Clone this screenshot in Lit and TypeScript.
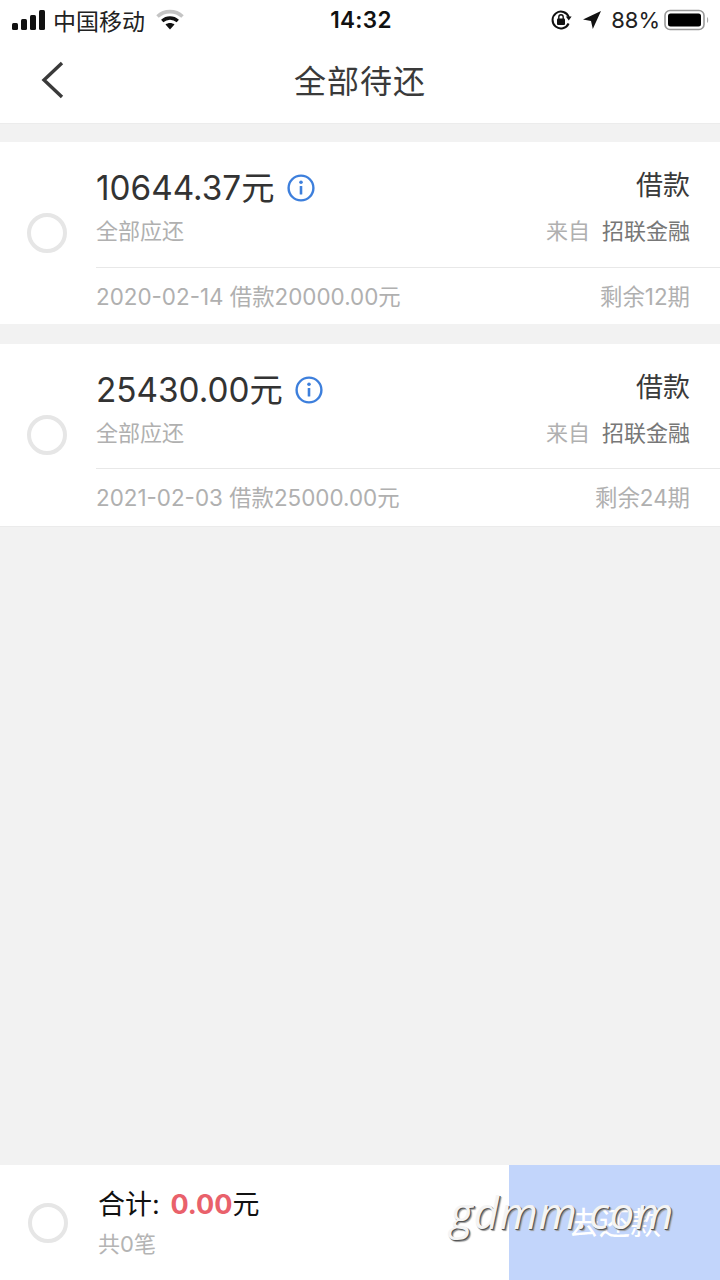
import { LitElement, html, css, svg } from "lit";
import { customElement } from "lit/decorators.js";

const loans = [
  { amount: "10644.37", date: "2020-02-14 借款20000.00元", left: "剩余12期" },
  { amount: "25430.00", date: "2021-02-03 借款25000.00元", left: "剩余24期" },
];

const infoIcon = svg`<svg class="info" width="28" height="28" viewBox="0 0 28 28" fill="none">
  <circle cx="14" cy="14" r="12.4" stroke="#3d7fdc" stroke-width="2.400"/>
  <rect x="12.7" y="12" width="2.6" height="8.5" rx="0.6" fill="#3d7fdc"/>
  <circle cx="14" cy="8.2" r="1.800" fill="#3d7fdc"/>
</svg>`;

@customElement("app-root")
export class AppRoot extends LitElement {
  static styles = css`
    :host {
      display: block;
      width: 720px;
      height: 1280px;
      position: relative;
      overflow: hidden;
      background: #f2f2f2;
      font-family: Inter, "Noto Sans CJK SC", sans-serif;
      color: #333;
    }
    .page { display: flex; flex-direction: column; height: 1280px; }
    .top { background: #fff; height: 123px; border-bottom: 1px solid #ececec; flex: none; }
    .status {
      height: 39px;
      display: grid;
      grid-template-columns: 1fr auto 1fr;
      align-items: center;
      padding: 0 10px 0 12px;
      color: #111;
    }
    .st-left { display: flex; align-items: center; gap: 8px; font-size: 23px; color: #222; }
    .st-right { display: flex; align-items: center; justify-content: flex-end; font-size: 22px; color: #222; }
    .time { font-size: 22.5px; font-weight: 600; letter-spacing: 0.3px; color: #111; }
    .pct { margin: 0 4px 0 9px; }
    .wifi { margin-left: 3px; }
    .loc { margin-left: 10px; }
    .nav { height: 84px; display: flex; align-items: center; justify-content: center; position: relative; }
    .nav h1 { margin: 0 0 4px; font-weight: 400; font-size: 32px; color: #3a3a3a; letter-spacing: 1px; }
    .back { position: absolute; left: 40px; top: 21px; }
    .list { flex: 1; padding-top: 18px; display: flex; flex-direction: column; gap: 20px; }
    .card { background: #fff; height: 182px; display: flex; align-items: flex-start; }
    .card.last { border-bottom: 1px solid #ebebeb; }
    .radio {
      width: 40px;
      height: 40px;
      box-sizing: border-box;
      border: 4px solid #e6e6e6;
      border-radius: 50%;
      flex: none;
    }
    .card .radio { margin: 71px 29px 0 27px; }
    .body { flex: 1; height: 100%; display: flex; flex-direction: column; min-width: 0; }
    .upper { height: 125px; padding-right: 30px; border-bottom: 1px solid #e8e8e8; display: flex; flex-direction: column; }
    .last .upper { height: 124px; }
    .row { display: flex; justify-content: space-between; align-items: center; }
    .r1 { height: 34px; margin-top: 26px; }
    .r2 { height: 30px; margin-top: 12px; }
    .amt { display: flex; align-items: center; font-size: 33.3px; color: #333; gap: 12px; }
    .info { margin-top: 6px; }
    .kind { font-size: 27px; color: #3a3a3a; margin-top: -4px; }
    .sub { font-size: 22px; color: #b0b0b0; }
    .from { font-size: 22px; color: #b0b0b0; display: flex; gap: 12px; }
    .from b { font-weight: 400; color: #777; }
    .lower { flex: 1; padding: 0 30px 3px 0; display: flex; justify-content: space-between; align-items: center; font-size: 22.4px; color: #b0b0b0; }
    .footer { height: 115px; flex: none; background: #fff; display: flex; align-items: stretch; }
    .footer .radio { margin: 38px 31px 0 28px; }
    .sum { flex: 1; padding-top: 21px; margin-left: -1px; }
    .total { font-size: 27px; color: #111; line-height: 38px; }
    .total b { color: #e9616b; margin-left: 3px; }
    .count { font-size: 22px; color: #b4b4b4; margin-top: 2px; }
    .pay {
      width: 211px;
      background: #c2d5fb;
      color: #fff;
      font-size: 31px;
      display: flex;
      align-items: center;
      justify-content: center;
      padding-bottom: 5px;
      box-sizing: border-box;
    }
    .mark {
      position: absolute;
      left: 450px;
      top: 1187px;
      font-family: "Open Sans", "DejaVu Sans", sans-serif;
      font-style: italic;
      font-size: 44px;
      line-height: 50px;
      color: #f4f4f4;
      text-shadow: 1px 1px 0 #555, 2px 2px 1px #999;
      letter-spacing: 0.6px;
    }
  `;

  render() {
    return html`
      <div class="page">
        <div class="top">
          <div class="status">
            <div class="st-left">
              <svg width="33" height="20" viewBox="0 0 33 20" fill="#111">
                <rect x="0" y="13" width="6" height="7" rx="1.5" />
                <rect x="9" y="9" width="6" height="11" rx="1.5" />
                <rect x="18" y="5" width="6" height="15" rx="1.5" />
                <rect x="27" y="0" width="6" height="20" rx="1.5" />
              </svg>
              <span>中国移动</span>
              <svg class="wifi" width="28" height="22" viewBox="0 0 28 22" fill="none">
                <path d="M1.500 7.500C8.500 1 19.500 1 26.500 7.500" stroke="#c4c4c4" stroke-width="3.6" />
                <path d="M6.200 12C10.800 8 17.200 8 21.800 12" stroke="#111" stroke-width="3.4" />
                <path d="M9.500 15.600L14 20.500L18.500 15.600C15.800 13.600 12.200 13.600 9.500 15.600Z" fill="#111" />
              </svg>
            </div>
            <div class="time">14:32</div>
            <div class="st-right">
              <svg width="22" height="22" viewBox="0 0 22 22" fill="none">
                <path d="M18.600 14.500A8.400 8.400 0 1 1 18.800 8" stroke="#111" stroke-width="2" />
                <path d="M15.800 7.600L21.600 7.600L18.800 11.600Z" fill="#111" />
                <rect x="7" y="9.600" width="8" height="6.400" rx="1" fill="#111" />
                <path d="M8.800 10V8a2.200 2.200 0 0 1 4.400 0v2" stroke="#111" stroke-width="1.4" />
              </svg>
              <svg class="loc" width="20" height="20" viewBox="0 0 20 20">
                <path d="M19 1L1 9.400L9 11L10.800 19Z" fill="#111" />
              </svg>
              <span class="pct">88%</span>
              <svg width="46" height="22" viewBox="0 0 46 22" fill="none">
                <rect x="1" y="1.500" width="39" height="19" rx="5" stroke="#999" stroke-width="1.6" />
                <rect x="4" y="4.500" width="33" height="13" rx="2.500" fill="#000" />
                <path d="M43 8c1.600.5 1.600 5.500 0 6z" fill="#aaa" />
              </svg>
            </div>
          </div>
          <div class="nav">
            <svg class="back" width="26" height="40" viewBox="0 0 26 40" fill="none">
              <path d="M22 3L4 20L22 37" stroke="#3a3a3a" stroke-width="3.4" />
            </svg>
            <h1>全部待还</h1>
          </div>
        </div>
        <div class="list">
          ${loans.map(
            (l, i) => html`
              <div class="card ${i === loans.length - 1 ? "last" : ""}">
                <div class="radio"></div>
                <div class="body">
                  <div class="upper">
                    <div class="row r1">
                      <div class="amt"><span>${l.amount}元</span>${infoIcon}</div>
                      <div class="kind">借款</div>
                    </div>
                    <div class="row r2">
                      <div class="sub">全部应还</div>
                      <div class="from">来自 <b>招联金融</b></div>
                    </div>
                  </div>
                  <div class="lower"><span>${l.date}</span><span>${l.left}</span></div>
                </div>
              </div>
            `
          )}
        </div>
        <div class="footer">
          <div class="radio"></div>
          <div class="sum">
            <div class="total">合计: <b>0.00</b>元</div>
            <div class="count">共0笔</div>
          </div>
          <div class="pay">去还款</div>
        </div>
      </div>
      <div class="mark">gdmm.com</div>
    `;
  }
}
